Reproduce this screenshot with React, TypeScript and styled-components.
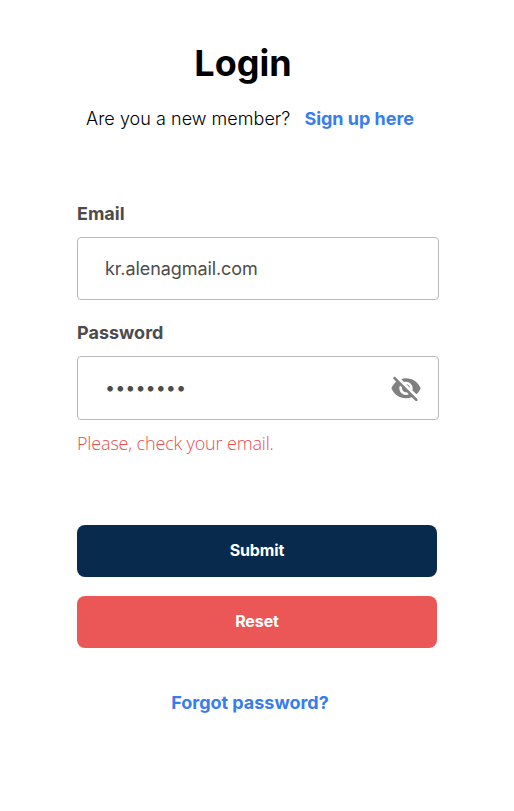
import React from "react";
import styled, { createGlobalStyle } from "styled-components";

const GlobalStyle = createGlobalStyle`
  * { box-sizing: border-box; }
  body { margin: 0; background: #fff; font-family: Inter, sans-serif; }
`;

const Page = styled.main`
  width: 514px;
  height: 811px;
  padding: 41px 0 0 77px;
`;

const Header = styled.header`
  width: 332px;
  display: flex;
  flex-direction: column;
  align-items: center;
`;

const Title = styled.h1`
  margin: 0;
  font-size: 36px;
  line-height: 44px;
  font-weight: 700;
  color: #000;
`;

const Prompt = styled.p`
  margin: 22px 0 0;
  padding-left: 14px;
  display: flex;
  gap: 14px;
  white-space: nowrap;
  font-size: 18px;
  line-height: 24px;
  font-weight: 300;
  letter-spacing: 0.03px;
  color: #000;
`;

const Link = styled.a`
  font-size: 18px;
  line-height: 24px;
  font-weight: 700;
  letter-spacing: -0.02px;
  color: #377dee;
  text-decoration: none;
`;

const Form = styled.form`
  width: 362px;
  margin-top: 71px;
`;

const Label = styled.label`
  display: block;
  font-size: 18px;
  line-height: 24px;
  font-weight: 700;
  color: #4c4c4c;
`;

const Field = styled.div<{ $height: number }>`
  display: flex;
  align-items: center;
  height: ${(p) => p.$height}px;
  margin: 11px 0 21px;
  padding: 0 16px 0 27px;
  border: 1px solid #b9b9b9;
  border-radius: 4px;
`;

const Input = styled.input`
  flex: 1;
  min-width: 0;
  padding: 0;
  border: 0;
  outline: 0;
  background: transparent;
  font: 400 18px/24px Inter, sans-serif;
  color: #4c4c4c;

  &[type="email"] { letter-spacing: -0.08px; }
`;

const HiddenIcon = styled.svg`
  width: 32px;
  height: 32px;
  margin-top: 1px;
  fill: #808080;
`;

const ErrorText = styled.p`
  margin: -10px 0 0;
  font: 300 18px/24px "Open Sans", sans-serif;
  letter-spacing: -0.16px;
  color: #e64e50;
`;

const Actions = styled.div`
  width: 360px;
  margin-top: 70px;
  display: flex;
  flex-direction: column;
  gap: 19px;
`;

const Button = styled.button<{ $color: string }>`
  height: 52px;
  padding: 0 0 2px;
  border: 0;
  border-radius: 8px;
  background: ${(p) => p.$color};
  font: 700 16px/20px Inter, sans-serif;
  letter-spacing: -0.1px;
  color: #fff;
`;

const Footer = styled.footer`
  width: 346px;
  margin-top: 43px;
  text-align: center;
`;

export default function App() {
  return (
    <>
      <GlobalStyle />
      <Page>
        <Header>
          <Title>Login</Title>
          <Prompt>
            <span>Are you a new member?</span>
            <Link>Sign up here</Link>
          </Prompt>
        </Header>
        <Form noValidate>
          <Label htmlFor="email">Email</Label>
          <Field $height={63}>
            <Input id="email" type="email" defaultValue="kr.alenagmail.com" spellCheck={false} />
          </Field>
          <Label htmlFor="password">Password</Label>
          <Field $height={64}>
            <Input id="password" type="password" defaultValue="password" />
            <HiddenIcon viewBox="0 0 24 24" aria-hidden="true">
              <path d="M12 6.5c2.76 0 5 2.24 5 5 0 .51-.1 1-.24 1.46l3.06 3.06c1.39-1.23 2.49-2.77 3.18-4.53C21.27 7.11 17 4 12 4c-1.27 0-2.49.2-3.64.57l2.17 2.17c.47-.14.96-.24 1.47-.24zM2.71 3.16c-.39.39-.39 1.02 0 1.41l1.97 1.97C3.06 7.83 1.77 9.53 1 11.5 2.73 15.89 7 19 12 19c1.52 0 2.97-.3 4.31-.82l2.72 2.72c.39.39 1.02.39 1.41 0 .39-.39.39-1.02 0-1.41L4.13 3.16c-.39-.39-1.03-.39-1.42 0zM12 16.5c-2.76 0-5-2.24-5-5 0-.77.18-1.5.49-2.14l1.57 1.57c-.03.18-.06.37-.06.57 0 1.66 1.34 3 3 3 .2 0 .38-.03.57-.07L14.14 16c-.65.32-1.37.5-2.14.5zm2.97-5.33c-.15-1.4-1.25-2.49-2.64-2.64l2.64 2.64z" />
            </HiddenIcon>
          </Field>
          <ErrorText>Please, check your email.</ErrorText>
          <Actions>
            <Button type="button" $color="#082b4d">Submit</Button>
            <Button type="button" $color="#eb5757">Reset</Button>
          </Actions>
        </Form>
        <Footer>
          <Link>Forgot password?</Link>
        </Footer>
      </Page>
    </>
  );
}
